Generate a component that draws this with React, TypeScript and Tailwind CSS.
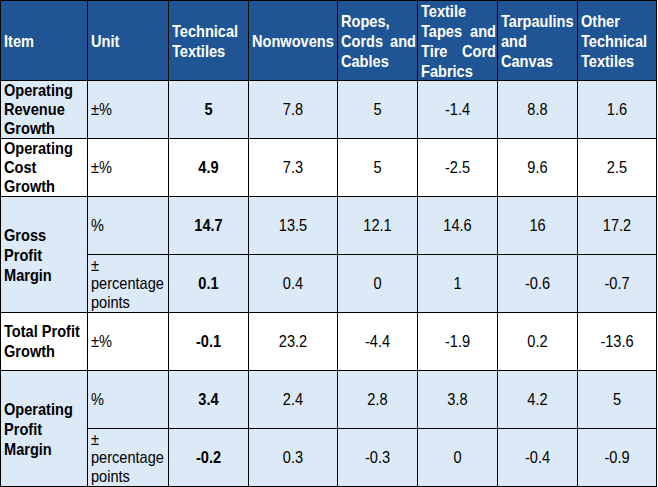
import React from "react";

const headers = [
  "Item",
  "Unit",
  "Technical Textiles",
  "Nonwovens",
  "Ropes, Cords and Cables",
  "Textile Tapes and Tire Cord Fabrics",
  "Tarpaulins and Canvas",
  "Other Technical Textiles",
];

type Row = {
  label?: string;
  span?: boolean;
  unit: string;
  values: string[];
  light: boolean;
};

const rows: Row[] = [
  { label: "Operating Revenue Growth", unit: "±%", values: ["5", "7.8", "5", "-1.4", "8.8", "1.6"], light: true },
  { label: "Operating Cost Growth", unit: "±%", values: ["4.9", "7.3", "5", "-2.5", "9.6", "2.5"], light: false },
  { label: "Gross Profit Margin", span: true, unit: "%", values: ["14.7", "13.5", "12.1", "14.6", "16", "17.2"], light: true },
  { unit: "± percentage points", values: ["0.1", "0.4", "0", "1", "-0.6", "-0.7"], light: true },
  { label: "Total Profit Growth", unit: "±%", values: ["-0.1", "23.2", "-4.4", "-1.9", "0.2", "-13.6"], light: false },
  { label: "Operating Profit Margin", span: true, unit: "%", values: ["3.4", "2.4", "2.8", "3.8", "4.2", "5"], light: true },
  { unit: "± percentage points", values: ["-0.2", "0.3", "-0.3", "0", "-0.4", "-0.9"], light: true },
];

// Text box drawn slightly narrow, as in the reference rendering
function T({ children, className = "" }: { children: React.ReactNode; className?: string }) {
  return (
    <div className={`w-[111.111%] shrink-0 origin-left scale-x-90 ${className}`}>{children}</div>
  );
}

export default function App() {
  return (
    <div
      className="w-[658px] h-[487px] bg-white text-[16.2px] text-black"
      style={{ fontFamily: '"Liberation Sans", Arial, sans-serif' }}
    >
      <div className="grid w-[657px] grid-cols-[86px_80px_79px_88px_79px_79px_79px_78px] grid-rows-[79px_repeat(7,57px)] gap-px bg-black p-px">
        {headers.map((h) => (
          <div
            key={h}
            className="flex items-center overflow-hidden bg-[#1f5594] pl-[3px] pr-[1px] font-bold leading-[20px] text-white"
          >
            <T className="text-justify">{h}</T>
          </div>
        ))}
        {rows.map((r, i) => {
          const bg = r.light ? "bg-[#dce9f7]" : "bg-white";
          return (
            <React.Fragment key={i}>
              {r.label !== undefined && (
                <div
                  className={`flex items-center overflow-hidden pl-[3px] pr-[1px] font-bold ${
                    r.span ? "row-span-2 leading-[20px]" : "leading-[19.3px]"
                  } ${bg}`}
                >
                  <T>{r.label}</T>
                </div>
              )}
              <div className={`flex items-center overflow-hidden pl-[3px] pr-[1px] leading-[18.5px] ${bg}`}>
                <T>{r.unit}</T>
              </div>
              {r.values.map((v, j) => (
                <div key={j} className={`flex items-center overflow-hidden ${bg} ${j === 0 ? "font-bold" : ""}`}>
                  <T className="text-center">{v}</T>
                </div>
              ))}
            </React.Fragment>
          );
        })}
      </div>
    </div>
  );
}
